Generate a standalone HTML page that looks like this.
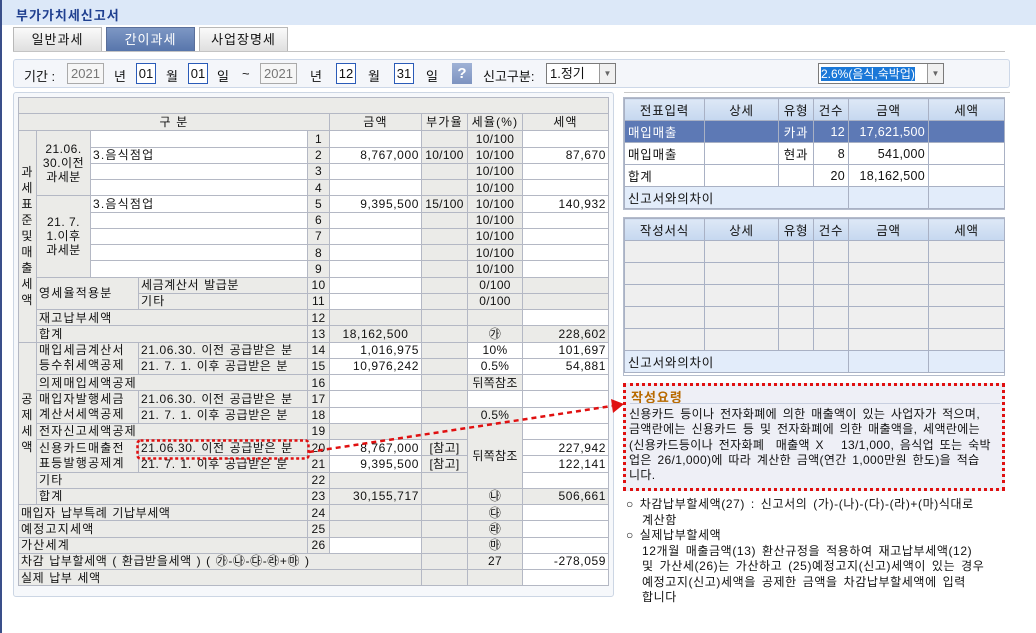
<!DOCTYPE html>
<html><head><meta charset="utf-8">
<style>
*{box-sizing:border-box;margin:0;padding:0}
body{width:1036px;height:633px;overflow:hidden;background:#fff;font-family:"Liberation Sans","Noto Sans CJK KR",sans-serif;font-size:12px;color:#111;position:relative}
.abs{position:absolute}
#lb{left:0;top:0;width:2px;height:633px;background:#3a4f8a}
#title{left:2px;top:0;width:1034px;height:25px;background:#dce8f8;color:#1f3f8f;font-weight:bold;font-size:13px;padding:5px 0 0 14px;letter-spacing:1px}
.tab{top:27px;height:25px;width:89px;border:1px solid #b8b8b8;border-bottom:none;background:linear-gradient(#fafafa,#dedede);text-align:center;font-size:13px;line-height:24px;letter-spacing:1px}
.tab.on{background:linear-gradient(#7d97c4,#5674aa);color:#fff;border-color:#5a6f9a}
#tl{left:13px;top:51px;width:992px;height:1px;background:#c4c4c4}
#bar{left:13px;top:59px;width:997px;height:29px;background:#f4f6fa;border:1px solid #cdd8e8;border-radius:3px}
.t{position:absolute;top:66px;font-size:13px}
.box{position:absolute;top:63px;height:21px;border:1px solid #2a5bb8;background:#fff;font-size:13px;text-align:center;line-height:19px}
.box.g{border-color:#aaa;background:#f6f6f6;color:#777}
#q{left:452px;top:63px;width:20px;height:21px;background:linear-gradient(#9fb2d6,#7d93c0);color:#fff;font-weight:bold;font-size:15px;text-align:center;line-height:21px}
.sel{position:absolute;top:63px;height:21px;border:1px solid #7a7a7a;background:#fff;font-size:13px;line-height:19px;padding-left:3px}
.arr{position:absolute;right:0;top:0;width:16px;height:19px;border-left:1px solid #999;background:#f0f0f0;font-size:8px;color:#666;text-align:center;line-height:19px}
#lp{left:13px;top:92px;width:601px;height:505px;border:1px solid #ccd6e4;border-radius:3px;background:#f6f8fb}
table{border-collapse:collapse;table-layout:fixed}
#L{position:absolute;left:18px;top:97px;width:590px}
#L td{border:1px solid #b4b8c4;height:16.25px;background:#ebebe8;padding:0 2px;white-space:nowrap;overflow:hidden;line-height:14px;letter-spacing:1.2px}
#L td.w{background:#fff}
#L td.r{text-align:right;letter-spacing:0.6px}
#L td.c{text-align:center;letter-spacing:0.3px}
#L td.p{letter-spacing:0.6px;word-spacing:1px}
#L tr.h td{height:17px;text-align:center}
.v{text-align:center;line-height:16px!important;white-space:normal!important}
.R{position:absolute;left:624px;width:380px}
.R td{border:1px solid #a9b1c4;height:22px;padding:0 3px;white-space:nowrap;font-size:12.5px;letter-spacing:0.8px}
.R tr.h td{background:linear-gradient(#dde8f6,#c5d7ef);text-align:center}
.R td.r{text-align:right;letter-spacing:0.3px}
.R td.c{text-align:center}
.R tr.s td{background:#5d79b5;color:#fff}
.R tr.d td{background:#e2ecfa}
.R tr.e td{background:#efefef}
.rw{position:absolute;border:1px solid #b4bccc}
#guide{left:623px;top:383px;width:382px;height:108px;background:#eeeff6;border:3px dotted #e01010}
#gt{position:absolute;left:5px;top:1px;color:#b86a00;font-weight:bold;font-size:13px;letter-spacing:1px}
#gl{position:absolute;left:4px;top:17px;width:370px;height:1px;background:#c8cfe0}
#gx{position:absolute;left:3px;top:21px;width:380px;font-size:12px;line-height:15.3px;white-space:nowrap;letter-spacing:0.35px;word-spacing:2px}
#notes{left:626px;top:497px;width:400px;font-size:12px;line-height:15.5px;white-space:nowrap;letter-spacing:0.6px;word-spacing:2px}
</style></head><body>
<div id="lb" class="abs"></div>
<div id="title" class="abs">부가가치세신고서</div>
<div class="abs tab" style="left:13px">일반과세</div>
<div class="abs tab on" style="left:106px">간이과세</div>
<div class="abs tab" style="left:199px">사업장명세</div>
<div id="tl" class="abs"></div>
<div id="bar" class="abs"></div>
<span class="t" style="left:24px">기간 :</span>
<div class="box g" style="left:67px;width:37px">2021</div>
<span class="t" style="left:114px">년</span>
<div class="box" style="left:136px;width:20px">01</div>
<span class="t" style="left:166px">월</span>
<div class="box" style="left:188px;width:20px">01</div>
<span class="t" style="left:217px">일</span>
<span class="t" style="left:242px">~</span>
<div class="box g" style="left:260px;width:37px">2021</div>
<span class="t" style="left:310px">년</span>
<div class="box" style="left:336px;width:20px">12</div>
<span class="t" style="left:368px">월</span>
<div class="box" style="left:394px;width:20px">31</div>
<span class="t" style="left:426px">일</span>
<div id="q" class="abs">?</div>
<span class="t" style="left:483px">신고구분:</span>
<div class="sel" style="left:546px;width:70px">1.정기<div class="arr">▼</div></div>
<div class="sel" style="left:818px;width:126px;padding-left:2px"><span style="background:#1a78d8;color:#fff;font-size:12px">2.6%(음식,숙박업)</span><div class="arr">▼</div></div>

<div id="lp" class="abs"></div>
<table id="L">
<colgroup><col style="width:18px"><col style="width:54px"><col style="width:48px"><col style="width:169px"><col style="width:22px"><col style="width:92px"><col style="width:46px"><col style="width:55px"><col style="width:86px"></colgroup>
<tr><td colspan="9"></td></tr>
<tr class="h"><td colspan="5">구 분</td><td>금액</td><td>부가율</td><td>세율(%)</td><td>세액</td></tr>
<tr><td rowspan="13" class="v">과<br>세<br>표<br>준<br>및<br>매<br>출<br>세<br>액</td><td rowspan="4" class="v" style="line-height:14px!important;letter-spacing:0.5px">21.06.<br>30.이전<br>과세분</td><td colspan="2" class="w"></td><td class="c">1</td><td class="w"></td><td></td><td class="c">10/100</td><td class="w"></td></tr>
<tr><td colspan="2" class="w">3.음식점업</td><td class="c">2</td><td class="w r">8,767,000</td><td class="c">10/100</td><td class="c">10/100</td><td class="w r">87,670</td></tr>
<tr><td colspan="2" class="w"></td><td class="c">3</td><td class="w"></td><td></td><td class="c">10/100</td><td class="w"></td></tr>
<tr><td colspan="2" class="w"></td><td class="c">4</td><td class="w"></td><td></td><td class="c">10/100</td><td class="w"></td></tr>
<tr><td rowspan="5" class="v" style="line-height:14px!important;letter-spacing:0.5px">21. 7.<br>1.이후<br>과세분</td><td colspan="2" class="w">3.음식점업</td><td class="c">5</td><td class="w r">9,395,500</td><td class="c">15/100</td><td class="c">10/100</td><td class="w r">140,932</td></tr>
<tr><td colspan="2" class="w"></td><td class="c">6</td><td class="w"></td><td></td><td class="c">10/100</td><td class="w"></td></tr>
<tr><td colspan="2" class="w"></td><td class="c">7</td><td class="w"></td><td></td><td class="c">10/100</td><td class="w"></td></tr>
<tr><td colspan="2" class="w"></td><td class="c">8</td><td class="w"></td><td></td><td class="c">10/100</td><td class="w"></td></tr>
<tr><td colspan="2" class="w"></td><td class="c">9</td><td class="w"></td><td></td><td class="c">10/100</td><td class="w"></td></tr>
<tr><td colspan="2" rowspan="2">영세율적용분</td><td class="p">세금계산서 발급분</td><td class="c">10</td><td class="w"></td><td></td><td class="c">0/100</td><td></td></tr>
<tr><td>기타</td><td class="c">11</td><td class="w"></td><td></td><td class="c">0/100</td><td></td></tr>
<tr><td colspan="3">재고납부세액</td><td class="c">12</td><td></td><td></td><td></td><td class="w"></td></tr>
<tr><td colspan="3">합계</td><td class="c">13</td><td class="r" style="text-align:center">18,162,500</td><td></td><td class="c">㉮</td><td class="r">228,602</td></tr>
<tr><td rowspan="10" class="v">공<br>제<br>세<br>액</td><td colspan="2" rowspan="2" style="line-height:15px;white-space:normal">매입세금계산서<br>등수취세액공제</td><td class="p">21.06.30. 이전 공급받은 분</td><td class="c">14</td><td class="w r">1,016,975</td><td></td><td class="w c">10%</td><td class="w r">101,697</td></tr>
<tr><td class="p">21. 7. 1. 이후 공급받은 분</td><td class="c">15</td><td class="w r">10,976,242</td><td></td><td class="w c">0.5%</td><td class="w r">54,881</td></tr>
<tr><td colspan="3">의제매입세액공제</td><td class="c">16</td><td class="w"></td><td></td><td class="c">뒤쪽참조</td><td class="w"></td></tr>
<tr><td colspan="2" rowspan="2" style="line-height:15px;white-space:normal">매입자발행세금<br>계산서세액공제</td><td class="p">21.06.30. 이전 공급받은 분</td><td class="c">17</td><td class="w"></td><td></td><td class="w"></td><td class="w"></td></tr>
<tr><td class="p">21. 7. 1. 이후 공급받은 분</td><td class="c">18</td><td class="w"></td><td></td><td class="c">0.5%</td><td class="w"></td></tr>
<tr><td colspan="3">전자신고세액공제</td><td class="c">19</td><td></td><td></td><td rowspan="4" class="c">뒤쪽참조</td><td class="w"></td></tr>
<tr><td colspan="2" rowspan="2" style="line-height:15px;white-space:normal">신용카드매출전<br>표등발행공제계</td><td class="p">21.06.30. 이전 공급받은 분</td><td class="c">20</td><td class="w r">8,767,000</td><td class="c">[참고]</td><td class="w r">227,942</td></tr>
<tr><td class="p">21. 7. 1. 이후 공급받은 분</td><td class="c">21</td><td class="w r">9,395,500</td><td class="c">[참고]</td><td class="w r">122,141</td></tr>
<tr><td colspan="3">기타</td><td class="c">22</td><td></td><td></td><td class="w"></td></tr>
<tr><td colspan="3">합계</td><td class="c">23</td><td class="r">30,155,717</td><td></td><td class="c">㉯</td><td class="r">506,661</td></tr>
<tr><td colspan="4" class="p">매입자 납부특례 기납부세액</td><td class="c">24</td><td></td><td></td><td class="c">㉰</td><td class="w"></td></tr>
<tr><td colspan="4">예정고지세액</td><td class="c">25</td><td></td><td></td><td class="c">㉱</td><td class="w"></td></tr>
<tr><td colspan="4">가산세계</td><td class="c">26</td><td class="w"></td><td></td><td class="c">㉲</td><td class="w"></td></tr>
<tr><td colspan="6" class="p">차감 납부할세액 ( 환급받을세액 ) ( ㉮-㉯-㉰-㉱+㉲ )</td><td></td><td class="c">27</td><td class="w r">-278,059</td></tr>
<tr><td colspan="6" class="p">실제 납부 세액</td><td></td><td></td><td class="w"></td></tr>
</table>

<div class="abs" style="left:624px;top:92px;width:386px;height:1px;background:#c8c8c8"></div>
<div class="rw" style="left:623px;top:97px;width:382px;height:113px"></div>
<table class="R" style="top:98px">
<colgroup><col style="width:80px"><col style="width:74px"><col style="width:35px"><col style="width:35px"><col style="width:80px"><col style="width:76px"></colgroup>
<tr class="h"><td>전표입력</td><td>상세</td><td>유형</td><td>건수</td><td>금액</td><td>세액</td></tr>
<tr class="s"><td>매입매출</td><td></td><td class="c">카과</td><td class="r">12</td><td class="r">17,621,500</td><td></td></tr>
<tr><td>매입매출</td><td></td><td class="c">현과</td><td class="r">8</td><td class="r">541,000</td><td></td></tr>
<tr><td>합계</td><td></td><td></td><td class="r">20</td><td class="r">18,162,500</td><td></td></tr>
<tr class="d"><td colspan="4">신고서와의차이</td><td></td><td></td></tr>
</table>
<div class="rw" style="left:623px;top:217px;width:382px;height:159px"></div>
<table class="R" style="top:218px">
<colgroup><col style="width:80px"><col style="width:74px"><col style="width:35px"><col style="width:35px"><col style="width:80px"><col style="width:76px"></colgroup>
<tr class="h"><td>작성서식</td><td>상세</td><td>유형</td><td>건수</td><td>금액</td><td>세액</td></tr>
<tr class="e"><td></td><td></td><td></td><td></td><td></td><td></td></tr>
<tr class="e"><td></td><td></td><td></td><td></td><td></td><td></td></tr>
<tr class="e"><td></td><td></td><td></td><td></td><td></td><td></td></tr>
<tr class="e"><td></td><td></td><td></td><td></td><td></td><td></td></tr>
<tr class="e"><td></td><td></td><td></td><td></td><td></td><td></td></tr>
<tr class="d"><td colspan="4" style="height:21px">신고서와의차이</td><td></td><td></td></tr>
</table>

<div id="guide" class="abs"><div id="gt">작성요령</div><div id="gl"></div>
<div id="gx">신용카드 등이나 전자화폐에 의한 매출액이 있는 사업자가 적으며,<br>금액란에는 신용카드 등 및 전자화폐에 의한 매출액을, 세액란에는<br>(신용카드등이나 전자화폐 &nbsp;매출액 X &nbsp; 13/1,000, 음식업 또는 숙박<br>업은 26/1,000)에 따라 계산한 금액(연간 1,000만원 한도)을 적습<br>니다.</div></div>
<div id="notes" class="abs">
<div>○ 차감납부할세액(27) : 신고서의 (가)-(나)-(다)-(라)+(마)식대로</div>
<div style="padding-left:16px">계산함</div>
<div>○ 실제납부할세액</div>
<div style="padding-left:16px">12개월 매출금액(13) 환산규정을 적용하여 재고납부세액(12)<br>및 가산세(26)는 가산하고 (25)예정고지(신고)세액이 있는 경우<br>예정고지(신고)세액을 공제한 금액을 차감납부할세액에 입력<br>합니다</div>
</div>

<svg class="abs" style="left:0;top:0" width="1036" height="633">
<rect x="137.5" y="440.5" width="171" height="18" rx="3" fill="none" stroke="#e01010" stroke-width="2.5" stroke-dasharray="3,2.5"/>
<line x1="309" y1="452" x2="612" y2="406" stroke="#e01010" stroke-width="2.5" stroke-dasharray="5,4"/>
<polygon points="611,399 624,404 613,413" fill="#e01010"/>
</svg>
</body></html>
